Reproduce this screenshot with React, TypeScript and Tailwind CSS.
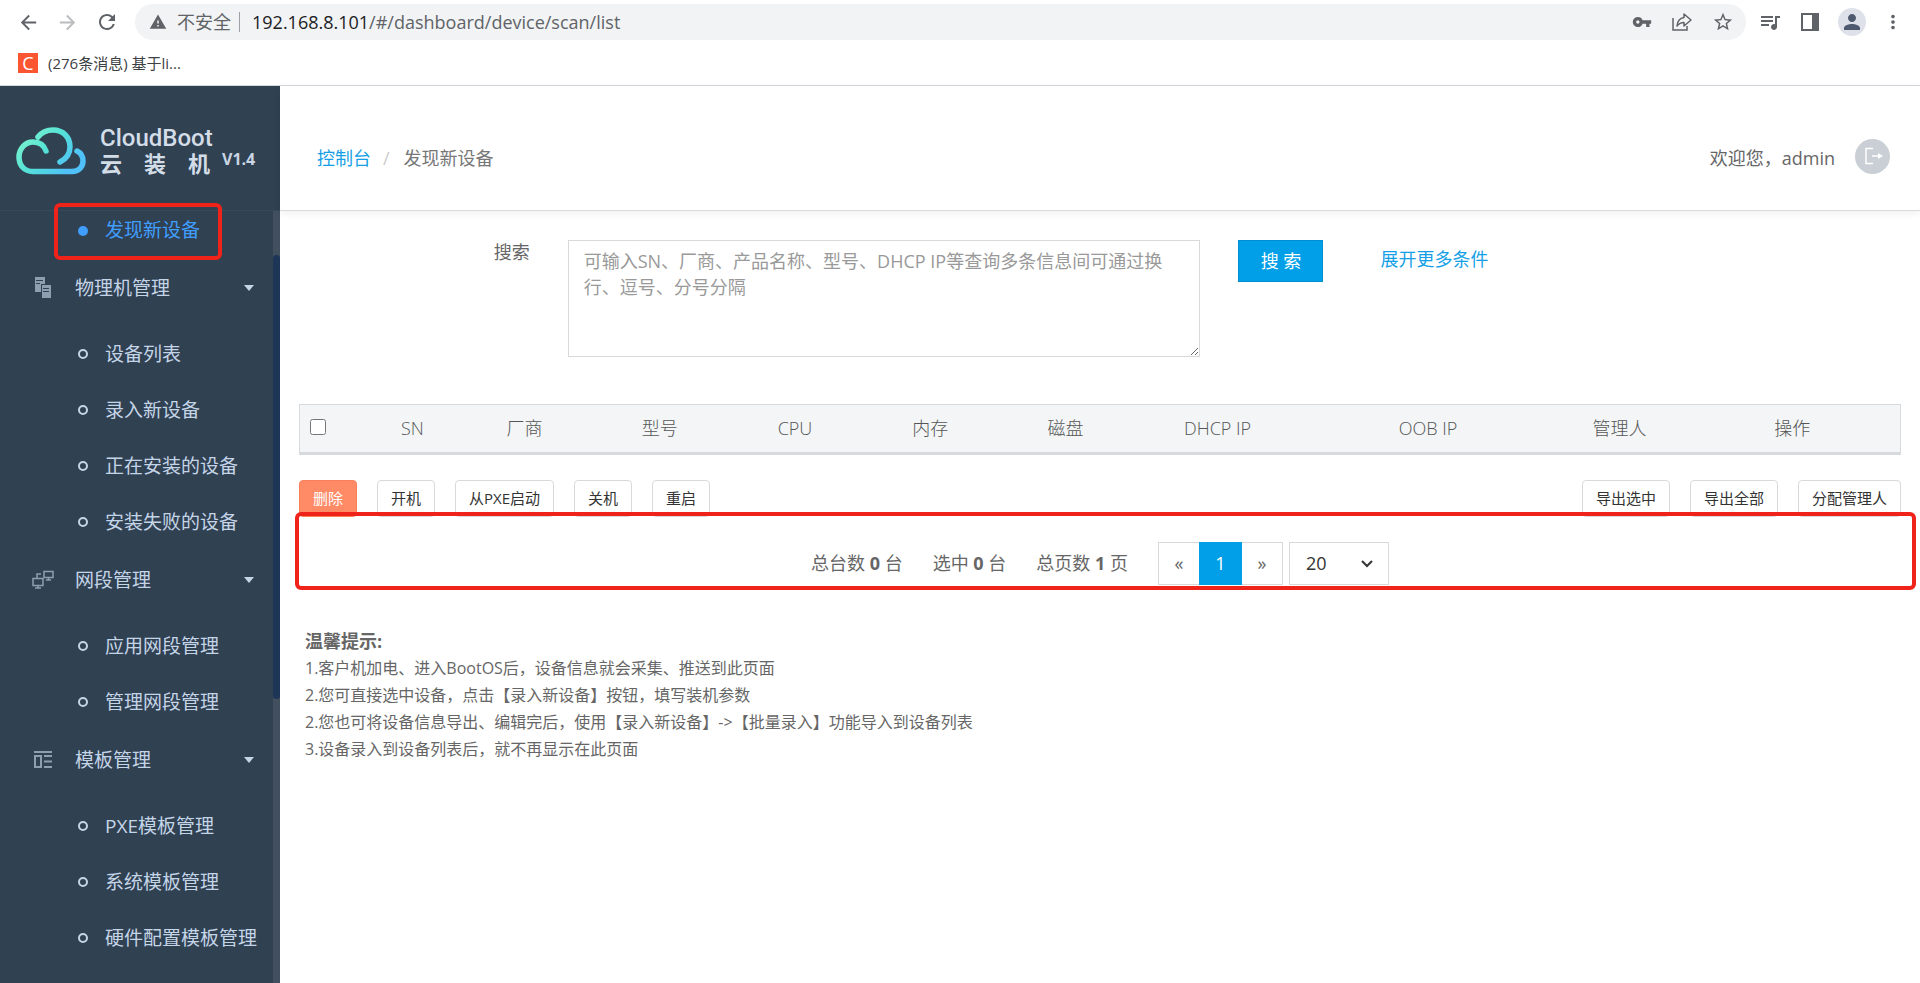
import React, { useState } from 'react';
import {
  MdArrowBack,
  MdArrowForward,
  MdRefresh,
  MdWarning,
  MdVpnKey,
  MdStarBorder,
  MdQueueMusic,
  MdPerson,
  MdMoreVert,
} from 'react-icons/md';

interface MenuGroup {
  name: string;
  icon: React.ReactNode;
  children: string[];
}

const ServerIcon = () => (
  <svg width="16" height="22" viewBox="0 0 16 22" fill="#8f9fb2">
    <path d="M0 0h10v7H6v8H0zM1 3v1h7V3zM1 6v1h4V6z" fillRule="evenodd" />
    <path d="M7 8h9v13H7zM8 11v1h6v-1zM8 14v1h6v-1z" fillRule="evenodd" />
  </svg>
);

const NetworkIcon = () => (
  <svg width="22" height="20" viewBox="0 0 22 20" fill="none" stroke="#8f9fb2" strokeWidth="1.5">
    <path d="M12 1.500h9v6h-9zM14 10h5M16.500 8v2M1 8.500h10v7H1zM3 18h6M6 16v2M5 8V4h4" />
  </svg>
);

const TemplateIcon = () => (
  <svg width="18" height="18" viewBox="0 0 18 18" fill="none" stroke="#8f9fb2" strokeWidth="2">
    <path d="M0 1h18M1 5h6v11H1zM10 5h8M10 10.500h8M10 16h8" />
  </svg>
);

const groups: MenuGroup[] = [
  {
    name: '物理机管理',
    icon: <ServerIcon />,
    children: ['设备列表', '录入新设备', '正在安装的设备', '安装失败的设备'],
  },
  {
    name: '网段管理',
    icon: <NetworkIcon />,
    children: ['应用网段管理', '管理网段管理'],
  },
  {
    name: '模板管理',
    icon: <TemplateIcon />,
    children: ['PXE模板管理', '系统模板管理', '硬件配置模板管理'],
  },
];

const columns = [
  { name: 'SN', width: 'w-[5.5%]' },
  { name: '厂商', width: 'w-[8.5%]' },
  { name: '型号', width: 'w-[8.4%]' },
  { name: 'CPU', width: 'w-[8.5%]' },
  { name: '内存', width: 'w-[8.4%]' },
  { name: '磁盘', width: 'w-[8.5%]' },
  { name: 'DHCP IP', width: 'w-[10.5%]' },
  { name: 'OOB IP', width: 'w-[15.8%]' },
  { name: '管理人', width: 'w-[8.1%]' },
  { name: '操作', width: 'w-[13.5%]' },
];

const leftActions = ['开机', '从PXE启动', '关机', '重启'];
const rightActions = ['导出选中', '导出全部', '分配管理人'];

const tips = [
  '1.客户机加电、进入BootOS后，设备信息就会采集、推送到此页面',
  '2.您可直接选中设备，点击【录入新设备】按钮，填写装机参数',
  '2.您也可将设备信息导出、编辑完后，使用【录入新设备】->【批量录入】功能导入到设备列表',
  '3.设备录入到设备列表后，就不再显示在此页面',
];

const BrowserBar = () => (
  <div className="h-[86px] border-b border-[#d5d8dc] bg-white text-[#5f6368]">
    <div className="flex h-11 items-center pl-[17px] pr-4">
      <button aria-label="后退" className="mr-4"><MdArrowBack size={23} /></button>
      <button aria-label="前进" className="mr-4 text-[#babcbe]"><MdArrowForward size={23} /></button>
      <button aria-label="刷新" className="mr-4"><MdRefresh size={24} /></button>
      <div className="flex h-9 flex-1 items-center rounded-full bg-[#f1f3f4] pl-[14px] pr-3">
        <MdWarning size={18} />
        <span className="ml-[10px] text-[18px]">不安全</span>
        <span className="mx-2 h-5 w-px bg-[#9aa0a6]" />
        <span className="ml-1 flex-1 text-[18px]">
          <span className="text-[#202124]">192.168.8.101</span>/#/dashboard/device/scan/list
        </span>
        <div className="flex items-center gap-5">
          <button aria-label="密码"><MdVpnKey size={20} /></button>
          <button aria-label="分享">
            <svg width="20" height="20" viewBox="0 0 20 20" fill="none" stroke="currentColor" strokeWidth="1.5">
              <path d="M1 6v12h14v-4" />
              <path d="M12 2l7 6-7 6v-3.500c-3 0-5 1-7 3.500 .5-5 3-8 7-8.500z" strokeLinejoin="round" />
            </svg>
          </button>
          <button aria-label="收藏"><MdStarBorder size={22} /></button>
        </div>
      </div>
      <div className="ml-3 flex items-center gap-4">
        <button aria-label="媒体"><MdQueueMusic size={24} /></button>
        <button aria-label="侧边栏" className="flex w-6 justify-center">
          <svg width="18" height="18" viewBox="0 0 18 18" fill="currentColor">
            <path d="M0 0h18v18H0zM2 2v14h9V2z" fillRule="evenodd" />
          </svg>
        </button>
        <button aria-label="用户" className="flex h-7 w-7 items-center justify-center rounded-full bg-[#dee1e9] text-[#4f5a70]">
          <MdPerson size={24} />
        </button>
        <button aria-label="更多"><MdMoreVert size={22} /></button>
      </div>
    </div>
    <a href="#bookmark" className="flex h-[38px] items-center gap-[10px] pl-[18px] text-[15px] text-[#3c4043]">
      <span className="flex h-5 w-5 items-center justify-center bg-[#fc5531] text-[18px] leading-5 text-white">C</span>
      (276条消息) 基于li...
    </a>
  </div>
);

const Logo = () => (
  <div className="flex h-[125px] items-center border-b border-[#3a4958] pl-4 pt-[6px]">
    <svg width="70" height="48" viewBox="0 0 70 48" fill="none" strokeWidth="5.5" strokeLinecap="round">
      <defs>
        <linearGradient id="cloud" x1="0" y1="0" x2="1" y2="0.6">
          <stop offset="0" stopColor="#84f5cc" />
          <stop offset="0.5" stopColor="#55e3d6" />
          <stop offset="1" stopColor="#4fc0f8" />
        </linearGradient>
      </defs>
      <path
        d="M30 24C28 18 23 15 17 15C9 15 3 22 3 30C3 38 8 44.500 17 44.500H56C63 44.500 67 39.500 67 34C67 29 65 26 61 24M22 10C26 5 31 3 37 3C47 3 54 10 54 20C54 27 50 32 44 35"
        stroke="url(#cloud)"
      />
    </svg>
    <div className="ml-[14px] w-[110px] font-['Roboto','Noto_Sans_CJK_SC',sans-serif] text-[#d3dde8]">
      <div className="text-[24px] font-medium leading-7">CloudBoot</div>
      <div className="flex justify-between text-[22px] font-bold leading-[26px]">
        <span>云</span>
        <span>装</span>
        <span>机</span>
      </div>
    </div>
    <span className="ml-3 pt-4 text-[16px] font-bold text-[#c9d5e3]">V1.4</span>
  </div>
);

const Sidebar = () => (
  <aside className="flex w-[280px] shrink-0 flex-col bg-[#304152] text-[19px] text-[#c5d5e8]">
    <Logo />
    <div className="flex flex-1">
      <nav className="flex-1">
        <a href="#scan" className="relative flex h-[47px] items-center pb-2 pl-[78px] text-[#409eff]">
          <span className="mr-[17px] h-[10px] w-[10px] rounded-full bg-[#409eff]" />
          发现新设备
          <span className="absolute -top-2 left-[54px] h-[57px] w-[168px] rounded-md border-4 border-[#f0231a]" />
        </a>
        {groups.map((group) => (
          <div key={group.name}>
            <button className="mb-2 flex h-[60px] w-full items-center pl-8 pr-[19px]">
              <span className="mr-[21px] flex w-[22px] justify-center">{group.icon}</span>
              {group.name}
              <svg className="ml-auto" width="10" height="6" viewBox="0 0 10 6" fill="currentColor">
                <path d="M0 0h10L5 6z" />
              </svg>
            </button>
            {group.children.map((child) => (
              <a key={child} href="#menu" className="flex h-14 items-center pl-[78px]">
                <span className="mr-[17px] h-[10px] w-[10px] rounded-full border-2 border-[#c5d5e8]" />
                {child}
              </a>
            ))}
          </div>
        ))}
      </nav>
      <div className="w-[7px] bg-[#414f5f] pt-11">
        <div className="h-[444px] rounded-full bg-[#1d3557]" />
      </div>
    </div>
  </aside>
);

const App = () => {
  const [keyword, setKeyword] = useState('');
  const [checked, setChecked] = useState(false);
  const [pageSize, setPageSize] = useState('20');

  return (
    <div className="flex min-h-screen flex-col bg-white font-['Open_Sans','Noto_Sans_CJK_SC',sans-serif] text-[#666]">
      <BrowserBar />
      <div className="flex flex-1">
        <Sidebar />
        <main className="min-w-0 flex-1">
          <header className="flex h-[125px] items-center justify-between border-b border-[#d9dcdf] pl-[37px] pr-[30px] pt-5 text-[18px] shadow-[0_2px_8px_rgba(0,0,0,0.07)]">
            <div className="flex items-center">
              <a href="#dashboard" className="text-[#169fe6]">控制台</a>
              <span className="mx-3 text-[#ccc]">/</span>
              <span className="ml-[2px] text-[#777]">发现新设备</span>
            </div>
            <div className="flex items-center gap-5">
              <span>欢迎您，admin</span>
              <button aria-label="退出" className="mb-1 flex h-[35px] w-[35px] items-center justify-center rounded-full bg-[#c9cfd4]">
                <svg width="20" height="18" viewBox="0 0 20 18" fill="none" stroke="#fff" strokeWidth="1.5">
                  <path d="M10 1.500H3v15h7M9 9h7" />
                  <path d="M15 6l5 3-5 3z" fill="#fff" stroke="none" />
                </svg>
              </button>
            </div>
          </header>

          <section className="px-[19px] pt-[29px]">
            <form className="flex items-start text-[18px]" onSubmit={(e) => e.preventDefault()}>
              <label htmlFor="keyword" className="w-[14.4%] text-right leading-6">搜索</label>
              <textarea
                id="keyword"
                value={keyword}
                onChange={(e) => setKeyword(e.target.value)}
                placeholder="可输入SN、厂商、产品名称、型号、DHCP IP等查询多条信息间可通过换行、逗号、分号分隔"
                className="ml-[38px] h-[117px] w-[39.5%] border border-[#d9d9d9] px-[15px] py-[7px] leading-[26px] placeholder:text-[#999]"
              />
              <button className="ml-[38px] h-[42px] w-[85px] border border-[#028fd2] bg-[#009fe8] text-white">搜 索</button>
              <a href="#more" className="ml-[57px] pt-[3px] leading-8 text-[#169fe6]">展开更多条件</a>
            </form>

            <table className="mt-[47px] w-full table-fixed border border-b-[3px] border-[#d8dbdd] bg-[#f3f5f7] text-[18px]">
              <thead>
                <tr className="h-[49px]">
                  <th className="w-[4.3%] pb-1 pl-[10px] text-left">
                    <input
                      type="checkbox"
                      aria-label="全选"
                      checked={checked}
                      onChange={() => setChecked(!checked)}
                      className="block h-4 w-4"
                    />
                  </th>
                  {columns.map((column) => (
                    <th key={column.name} className={`${column.width} font-light text-[#555]`}>{column.name}</th>
                  ))}
                </tr>
              </thead>
            </table>

            <div className="mt-[25px] flex gap-5 text-[15px] text-[#333]">
              <button className="h-[37px] rounded border border-[#f98058] bg-[#ff8a66] px-[13px] text-white">删除</button>
              {leftActions.map((action) => (
                <button key={action} className="h-[37px] rounded border border-[#d9d9d9] px-[13px]">{action}</button>
              ))}
              <div className="ml-auto flex gap-5">
                {rightActions.map((action) => (
                  <button key={action} className="h-[37px] rounded border border-[#d9d9d9] px-[13px]">{action}</button>
                ))}
              </div>
            </div>

            <div className="relative flex items-center justify-center pt-[25px] text-[18px]">
              <span>总台数 <b>0</b> 台</span>
              <span className="ml-[30px]">选中 <b>0</b> 台</span>
              <span className="ml-[30px]">总页数 <b>1</b> 页</span>
              <div className="ml-[30px] flex h-[43px] border border-[#d9d9d9]">
                <button className="w-10">«</button>
                <button className="-my-px w-[43px] bg-[#009fe8] text-white">1</button>
                <button className="w-10">»</button>
              </div>
              <div className="relative ml-[6px]">
                <select
                  aria-label="每页条数"
                  value={pageSize}
                  onChange={(e) => setPageSize(e.target.value)}
                  className="block h-[43px] w-[100px] appearance-none border border-[#d9d9d9] bg-white pl-4 text-[18px] text-[#333]"
                >
                  <option>20</option>
                  <option>50</option>
                  <option>100</option>
                </select>
                <svg className="pointer-events-none absolute right-4 top-[18px]" width="12" height="8" viewBox="0 0 12 8" fill="none" stroke="#333" strokeWidth="2">
                  <path d="M1 1l5 5 5-5" />
                </svg>
              </div>
              <span className="pointer-events-none absolute -left-1 -right-[15px] -top-[5px] h-[78px] rounded-md border-4 border-[#f0231a]" />
            </div>

            <div className="mt-[43px] pl-[6px] text-[16px] leading-[27px]">
              <h2 className="text-[18px] font-bold">温馨提示:</h2>
              {tips.map((tip) => (
                <p key={tip}>{tip}</p>
              ))}
            </div>
          </section>
        </main>
      </div>
    </div>
  );
};

export default App;
